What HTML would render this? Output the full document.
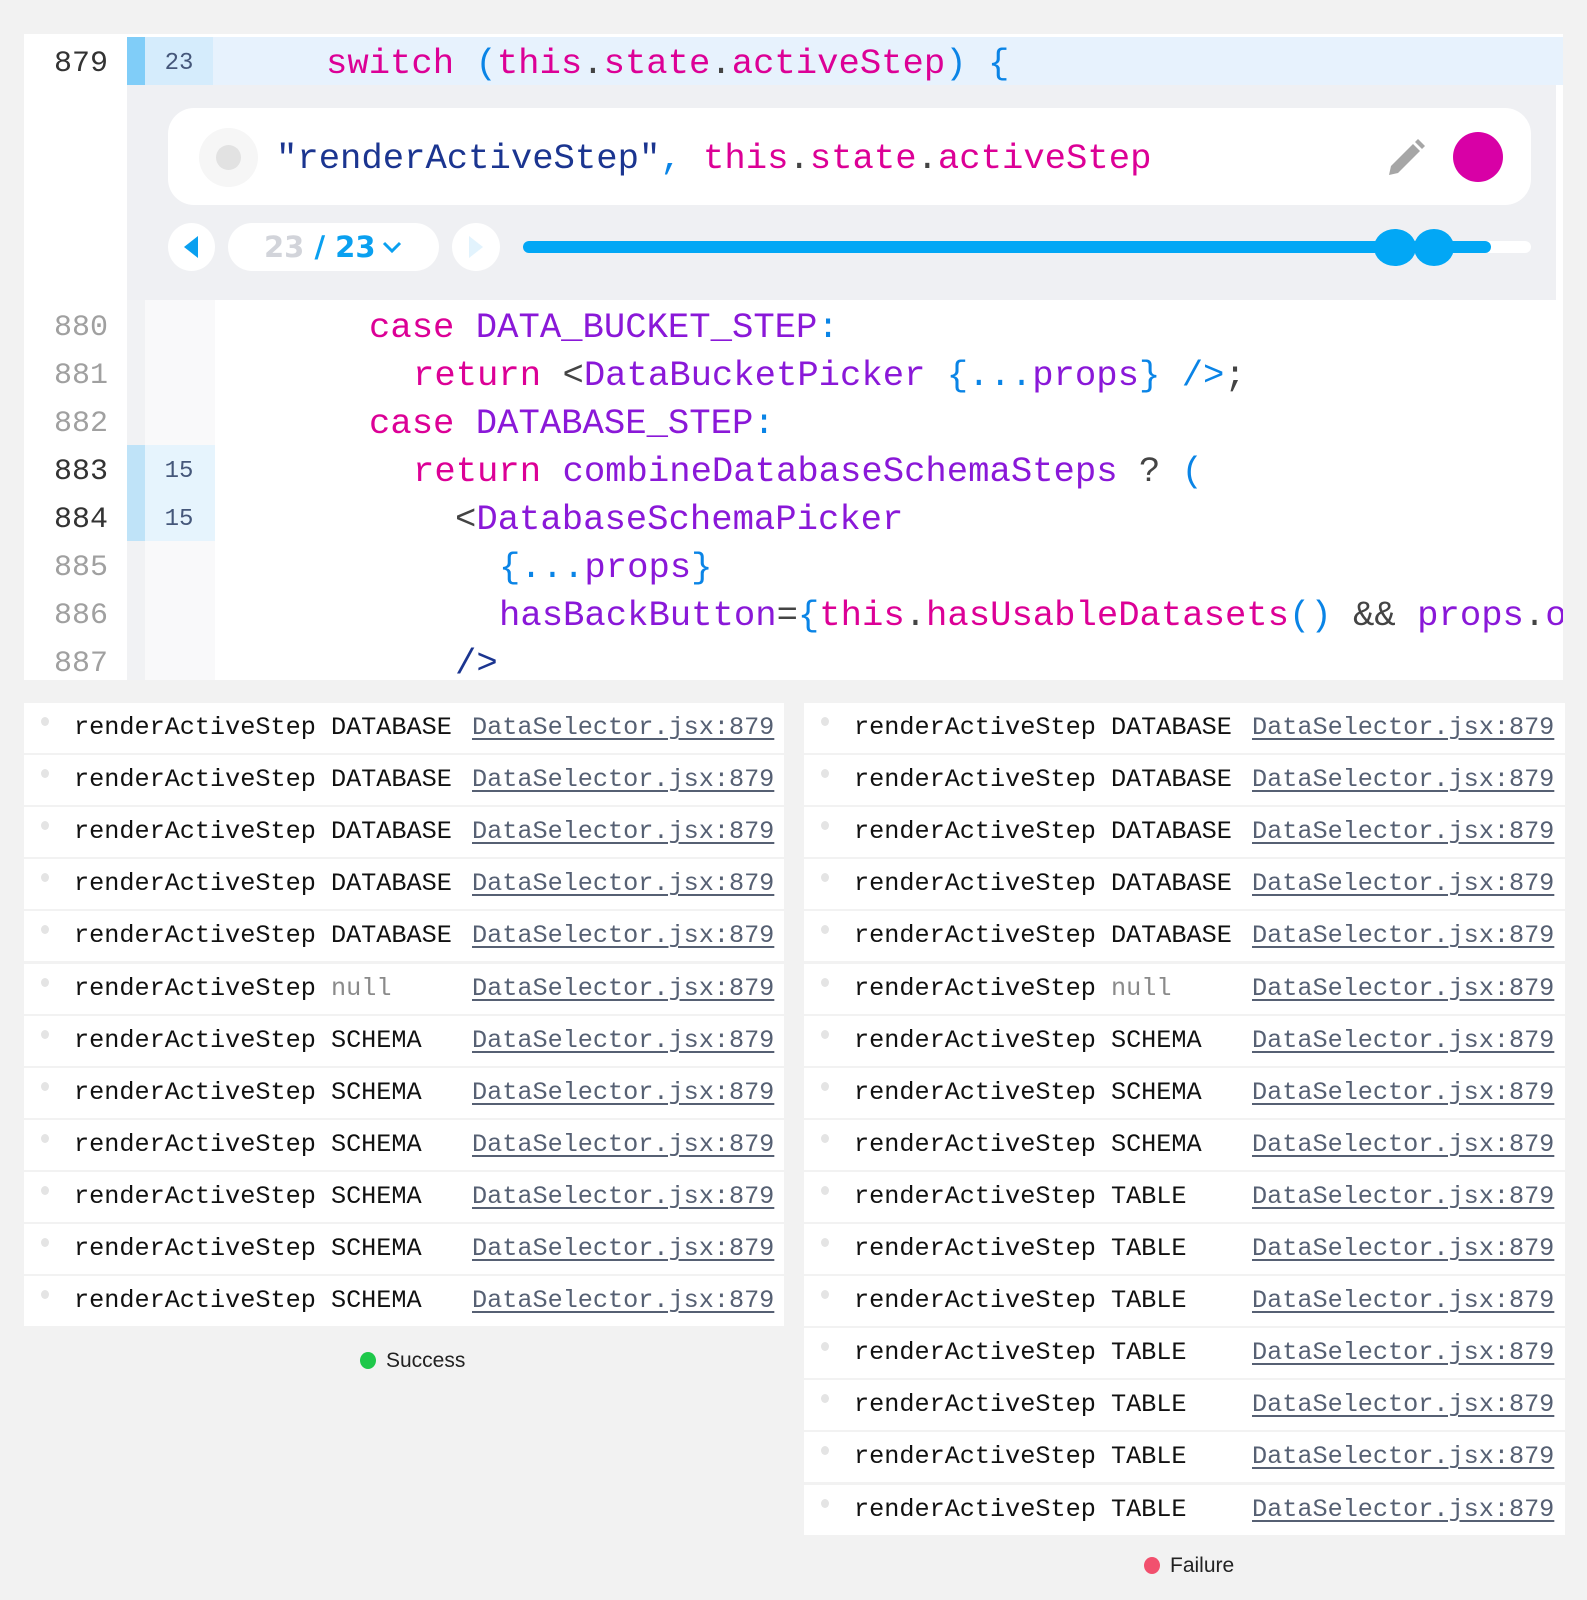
<!DOCTYPE html>
<html><head><meta charset="utf-8"><style>
*{margin:0;padding:0;box-sizing:border-box}
body{width:1587px;height:1600px;background:#f2f2f2;position:relative;overflow:hidden;font-family:"Liberation Mono",monospace}
.abs{position:absolute}
.code{position:absolute;font-family:"Liberation Mono",monospace;font-size:35.6px;white-space:pre;line-height:48px}
.ln{position:absolute;left:24px;width:84px;text-align:right;font-family:"Liberation Mono",monospace;font-size:30px;line-height:48px;color:#a0a0a0}
.m{color:#dc0096}.p{color:#8a18d8}.b{color:#0a84e6}.d{color:#444}.n{color:#1b3590}
.row{position:absolute;height:50px;background:#fff;font-size:25.2px;line-height:50px;white-space:pre;color:#111}
.row .dot{position:absolute;left:17px;top:14px;width:8px;height:9px;border-radius:50%;background:#e4e4e4}
.row .t{position:absolute;left:50px}
.row .l{position:absolute;left:448px;color:#566073;text-decoration:underline;text-decoration-thickness:1.5px;text-underline-offset:4px}
.g{color:#8a8a8a}
.leg{position:absolute;font-family:"Liberation Sans",sans-serif;font-size:21px;color:#222;line-height:24px}
.leg i{position:absolute;left:-26px;top:3px;width:16px;height:17px;border-radius:50%}
</style></head><body>
<div class="abs" style="left:24px;top:34px;width:1539px;height:646px;background:#fff"></div>
<div class="abs" style="left:127px;top:85px;width:1429px;height:215px;background:#eff0f3"></div>
<div class="abs" style="left:127px;top:300px;width:18px;height:380px;background:#f1f2f4"></div>
<div class="abs" style="left:145px;top:300px;width:70px;height:380px;background:#f9f9fa"></div>
<div class="abs" style="left:127px;top:37px;width:1436px;height:48px;background:#e7f2fd"></div>
<div class="abs" style="left:127px;top:37px;width:18px;height:48px;background:#80cdf8"></div>
<div class="abs" style="left:145px;top:37px;width:68px;height:48px;background:#d5ecfc"></div>
<div class="abs" style="left:145px;top:40px;width:68px;line-height:48px;text-align:center;font-size:24px;color:#45577a">23</div>
<div class="ln" style="top:40px;color:#333">879</div>
<div class="code" style="left:326px;top:40px"><span class="m">switch</span> <span class="b">(</span><span class="m">this</span><span class="d">.</span><span class="m">state</span><span class="d">.</span><span class="m">activeStep</span><span class="b">)</span> <span class="b">{</span></div>
<div class="abs" style="left:168px;top:108px;width:1363px;height:97px;background:#fff;border-radius:26px"></div>
<div class="abs" style="left:199px;top:128px;width:59px;height:59px;border-radius:50%;background:#f6f6f6"></div>
<div class="abs" style="left:216px;top:145px;width:25px;height:25px;border-radius:50%;background:#e2e2e2"></div>
<div class="code" style="left:276px;top:135px"><span class="n">"renderActiveStep"</span><span class="b">,</span> <span class="m">this</span><span class="d">.</span><span class="m">state</span><span class="d">.</span><span class="m">activeStep</span></div>
<svg class="abs" style="left:1386px;top:138px" width="40" height="40" viewBox="0 0 40 40"><path d="M3 37 L5 28 L27 6 L34 13 L12 35 Z" fill="#a6a6a6"/><path d="M29 4 L32 1 L39 8 L36 11 Z" fill="#a6a6a6"/></svg>
<div class="abs" style="left:1453px;top:132px;width:50px;height:50px;border-radius:50%;background:#d800a6"></div>
<div class="abs" style="left:168px;top:223px;width:47px;height:48px;border-radius:50%;background:#fff"></div>
<svg class="abs" style="left:181px;top:235px" width="20" height="24"><path d="M17 1 L17 23 L3 12 Z" fill="#0aa0f0"/></svg>
<div class="abs" style="left:228px;top:223px;width:211px;height:48px;border-radius:24px;background:#fff"></div>
<div class="abs" style="left:264px;top:223px;line-height:48px;font-family:'DejaVu Sans',sans-serif;font-weight:bold;font-size:29px;white-space:pre"><span style="color:#d2d4da">23</span><span style="color:#0aa0f0"> / 23</span></div>
<svg class="abs" style="left:381px;top:240px" width="22" height="14"><path d="M3 3 L11 11 L19 3" stroke="#0aa0f0" stroke-width="3" fill="none"/></svg>
<div class="abs" style="left:452px;top:223px;width:48px;height:48px;border-radius:50%;background:#fff"></div>
<svg class="abs" style="left:466px;top:235px" width="20" height="24"><path d="M3 1 L3 23 L17 12 Z" fill="#e2f3fd"/></svg>
<div class="abs" style="left:523px;top:241px;width:1008px;height:12px;border-radius:6px;background:#fff"></div>
<div class="abs" style="left:523px;top:241px;width:968px;height:12px;border-radius:6px;background:#02a7f5"></div>
<div class="abs" style="left:1374px;top:229px;width:42px;height:37px;border-radius:50%;background:#02a7f5"></div>
<div class="abs" style="left:1414px;top:229px;width:40px;height:37px;border-radius:50%;background:#02a7f5"></div>
<div class="abs" style="left:127px;top:445px;width:18px;height:96px;background:#bfe3f8"></div>
<div class="abs" style="left:145px;top:445px;width:70px;height:96px;background:#e6f4fd"></div>
<div class="abs" style="left:145px;top:448px;width:68px;line-height:48px;text-align:center;font-size:24px;color:#45577a">15<br>15</div>
<div class="ln" style="top:304px">880</div>
<div class="ln" style="top:352px">881</div>
<div class="ln" style="top:400px">882</div>
<div class="ln" style="top:448px;color:#333">883</div>
<div class="ln" style="top:496px;color:#333">884</div>
<div class="ln" style="top:544px">885</div>
<div class="ln" style="top:592px">886</div>
<div class="ln" style="top:640px">887</div>
<div class="code" style="left:369px;top:304px"><span class="m">case</span> <span class="p">DATA_BUCKET_STEP</span><span class="b">:</span></div>
<div class="code" style="left:413px;top:352px"><span class="m">return</span> <span class="d">&lt;</span><span class="p">DataBucketPicker</span> <span class="b">{...</span><span class="p">props</span><span class="b">}</span> <span class="b">/&gt;</span><span class="d">;</span></div>
<div class="code" style="left:369px;top:400px"><span class="m">case</span> <span class="p">DATABASE_STEP</span><span class="b">:</span></div>
<div class="code" style="left:413px;top:448px"><span class="m">return</span> <span class="p">combineDatabaseSchemaSteps</span> <span class="d">?</span> <span class="b">(</span></div>
<div class="code" style="left:455px;top:496px"><span class="d">&lt;</span><span class="p">DatabaseSchemaPicker</span></div>
<div class="code" style="left:499px;top:544px"><span class="b">{...</span><span class="p">props</span><span class="b">}</span></div>
<div class="code" style="left:499px;top:592px;width:1064px;overflow:hidden"><span class="p">hasBackButton</span><span class="d">=</span><span class="b">{</span><span class="m">this</span><span class="d">.</span><span class="m">hasUsableDatasets</span><span class="b">()</span> <span class="d">&amp;&amp;</span> <span class="p">props</span><span class="d">.</span><span class="p">on</span></div>
<div class="code" style="left:455px;top:640px;height:40px;overflow:hidden"><span class="n">/&gt;</span></div>
<div class="abs" style="left:1563px;top:34px;width:24px;height:646px;background:#f2f2f2"></div>

<div id="L"></div><div id="R"></div>
<div class="leg" style="left:386px;top:1349px"><i style="background:#1ec84a"></i>Success</div>
<div class="leg" style="left:1170px;top:1554px"><i style="background:#f2506e"></i>Failure</div>
<script>
var L=["DATABASE","DATABASE","DATABASE","DATABASE","DATABASE","null","SCHEMA","SCHEMA","SCHEMA","SCHEMA","SCHEMA","SCHEMA"];
var R=["DATABASE","DATABASE","DATABASE","DATABASE","DATABASE","null","SCHEMA","SCHEMA","SCHEMA","TABLE","TABLE","TABLE","TABLE","TABLE","TABLE","TABLE"];
function mk(arr,x,w){var h="";arr.forEach(function(s,i){var y=703+i*52.1;
h+='<div class="row" style="left:'+x+'px;top:'+y+'px;width:'+w+'px"><span class="dot"></span><span class="t">renderActiveStep '+(s=="null"?'<span class="g">null</span>':s)+'</span><span class="l">DataSelector.jsx:879</span></div>';});return h;}
document.getElementById("L").innerHTML=mk(L,24,760);
document.getElementById("R").innerHTML=mk(R,804,761);
</script>
</body></html>
